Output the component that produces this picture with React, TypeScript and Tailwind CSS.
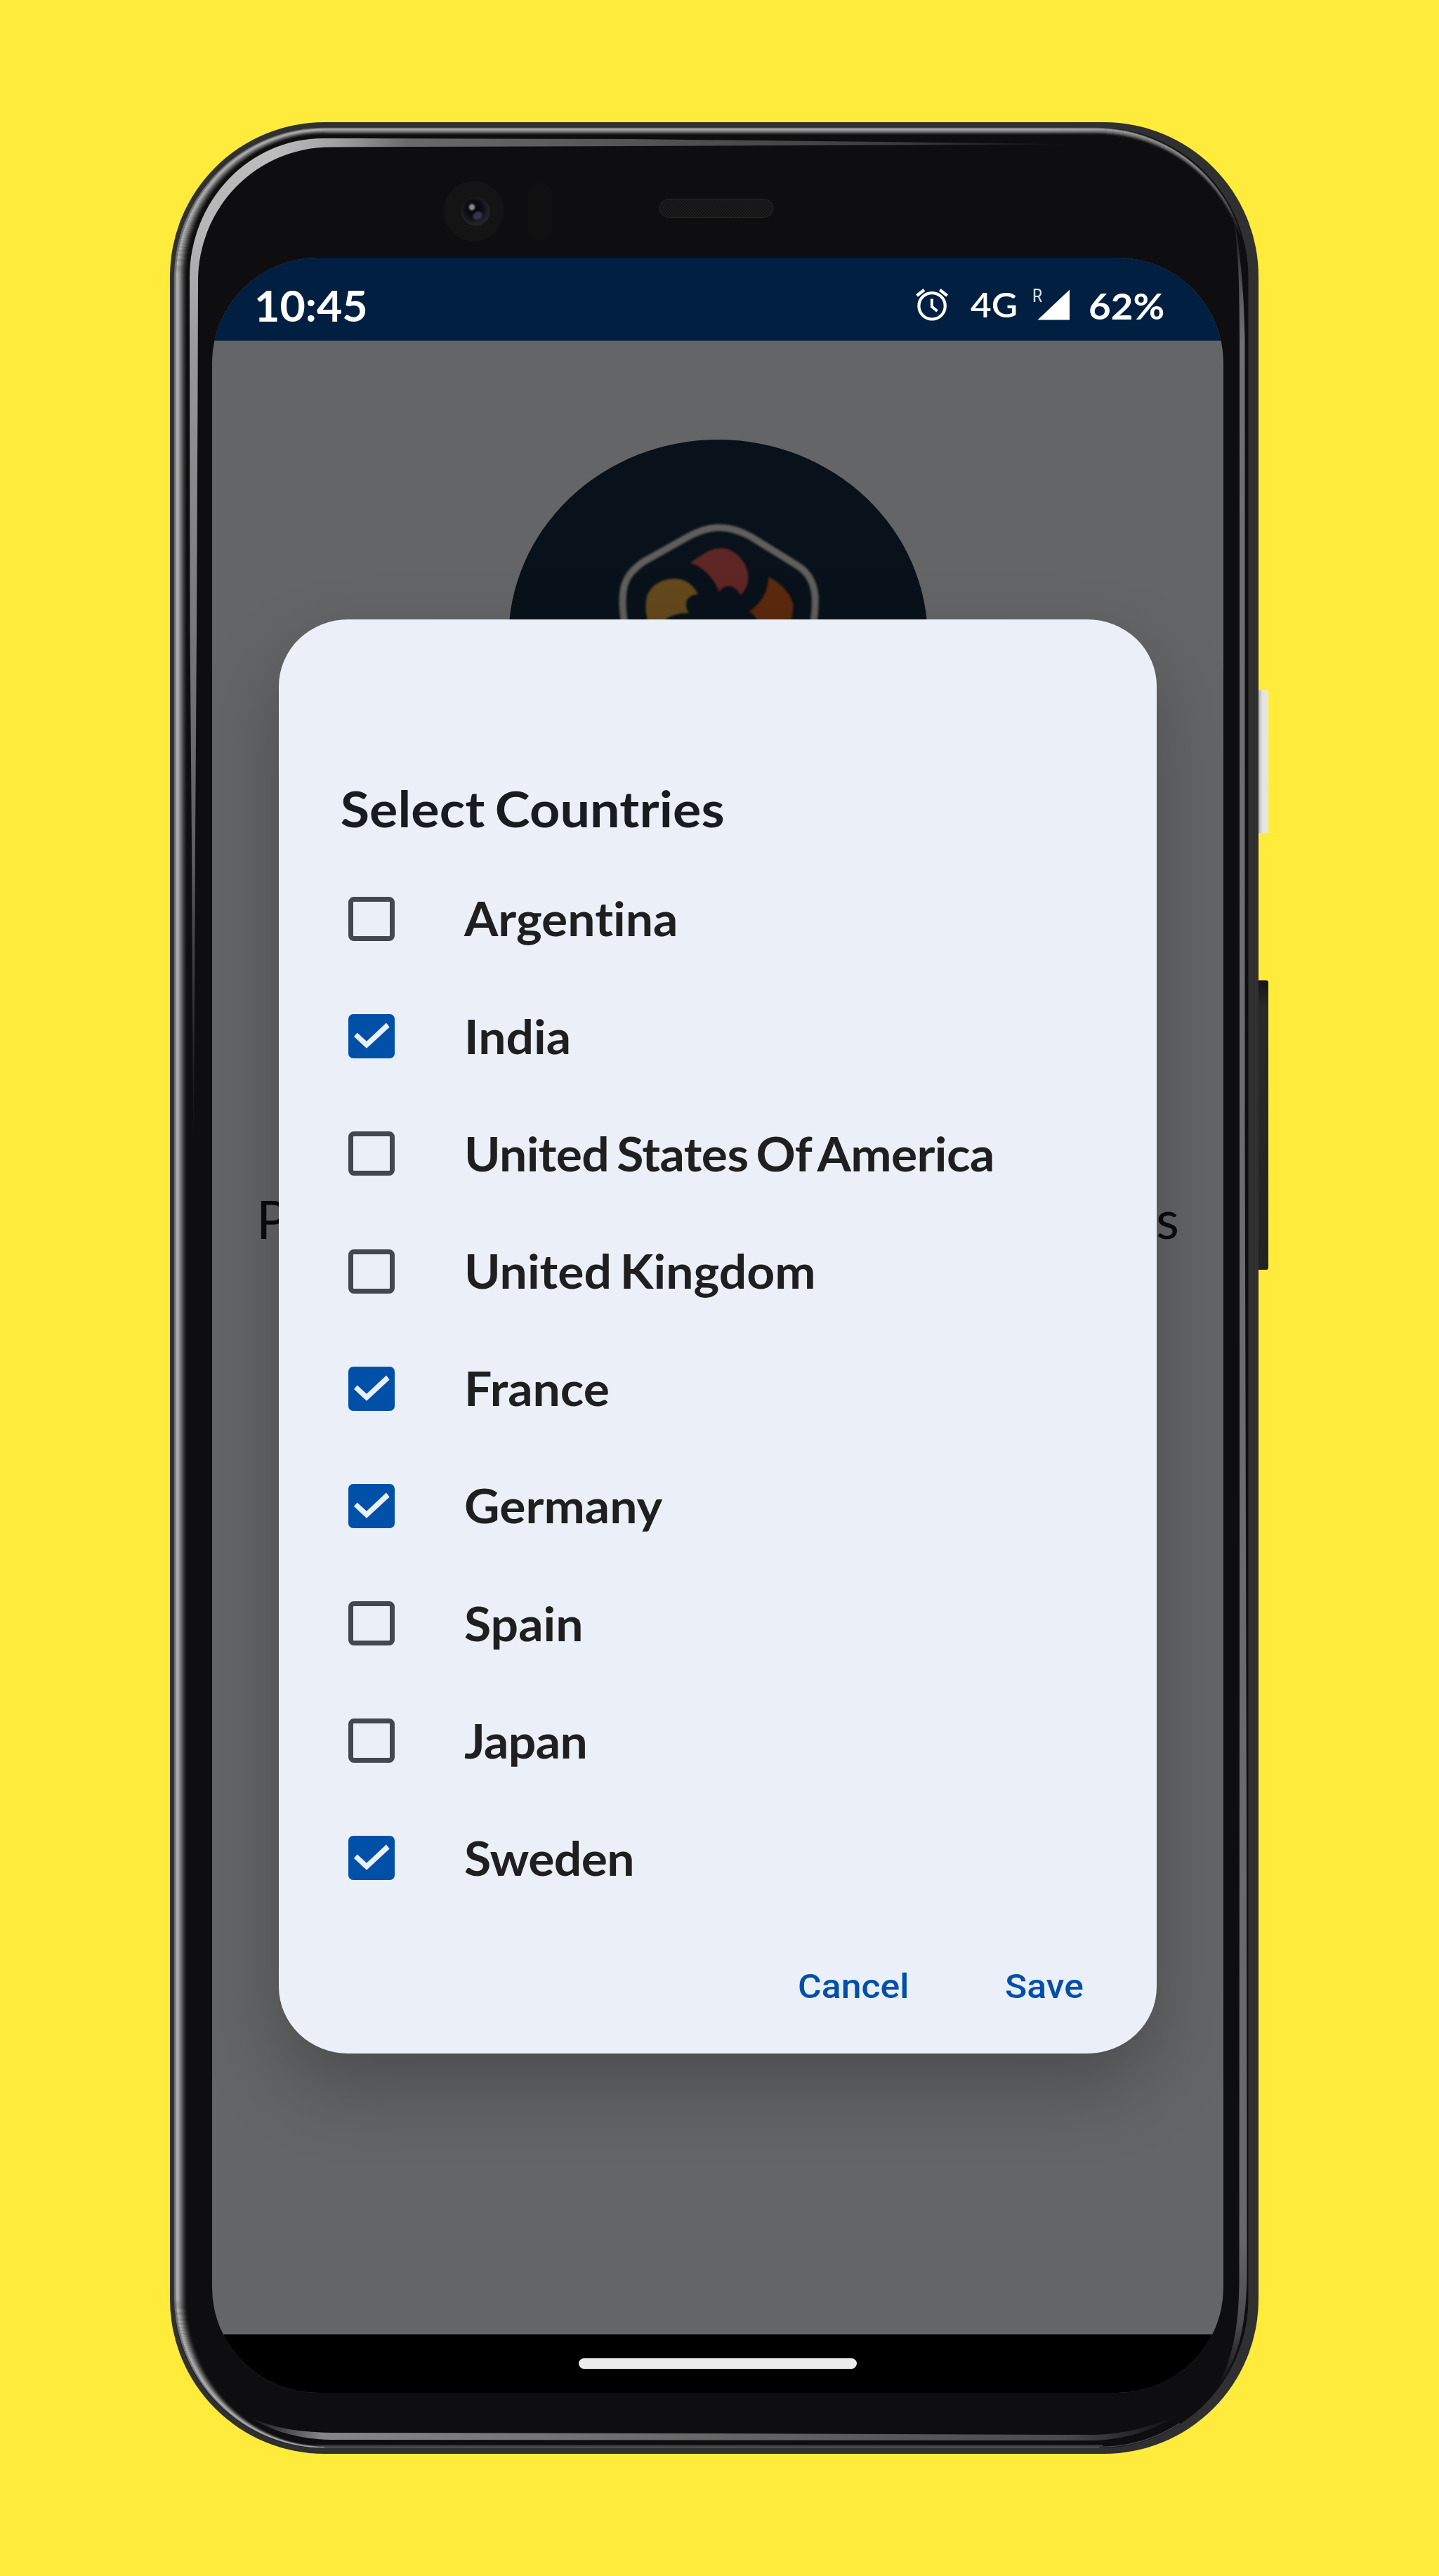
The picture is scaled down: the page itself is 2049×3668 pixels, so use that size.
import React from "react";

const COUNTRIES: { name: string; checked: boolean; tight?: boolean }[] = [
  { name: "Argentina", checked: false },
  { name: "India", checked: true },
  { name: "United States Of America", checked: false, tight: true },
  { name: "United Kingdom", checked: false },
  { name: "France", checked: true },
  { name: "Germany", checked: true },
  { name: "Spain", checked: false },
  { name: "Japan", checked: false, tight: true },
  { name: "Sweden", checked: true, tight: true },
];

const mix = (v: number) => {
  const n = Math.round(v);
  return `rgb(${n},${n},${n + 1})`;
};

/* Brightness of the outer metal edge, from the rim inwards, one value per pixel. */
const LEFT_RIM = [112, 122, 128, 172, 176, 172, 160, 148, 134, 120, 104, 90, 74, 62, 50, 38, 28, 20, 16];

function Bezel() {
  return (
    <svg className="absolute inset-0 h-full w-full" viewBox="242 174 1550 3320" fill="none">
      <defs>
        <linearGradient id="topFade" gradientUnits="userSpaceOnUse" x1="260" y1="0" x2="1540" y2="0">
          <stop offset="0" stopColor="#b4b4b4" />
          <stop offset="0.1" stopColor="#bdbdbd" />
          <stop offset="0.17" stopColor="#a2a2a2" />
          <stop offset="0.25" stopColor="#6a6a6a" />
          <stop offset="0.5" stopColor="#545454" />
          <stop offset="0.8" stopColor="#3c3c3c" />
          <stop offset="1" stopColor="#0e0e10" />
        </linearGradient>
        <linearGradient id="leftFade" gradientUnits="userSpaceOnUse" x1="0" y1="330" x2="0" y2="1620">
          <stop offset="0" stopColor="#b6b6b6" />
          <stop offset="0.14" stopColor="#989898" />
          <stop offset="0.45" stopColor="#777777" />
          <stop offset="0.7" stopColor="#5c5c5e" />
          <stop offset="1" stopColor="#0e0e10" />
        </linearGradient>
        <linearGradient id="rightFade" gradientUnits="userSpaceOnUse" x1="0" y1="300" x2="0" y2="3400">
          <stop offset="0" stopColor="#0e0e10" />
          <stop offset="0.04" stopColor="#5e5e60" />
          <stop offset="0.06" stopColor="#707073" />
          <stop offset="0.93" stopColor="#68686b" />
          <stop offset="0.97" stopColor="#4c4c4e" />
          <stop offset="1" stopColor="#0e0e10" />
        </linearGradient>
        <linearGradient id="bottomFade" gradientUnits="userSpaceOnUse" x1="353" y1="0" x2="1680" y2="0">
          <stop offset="0" stopColor="#0e0e10" />
          <stop offset="0.08" stopColor="#868686" />
          <stop offset="0.35" stopColor="#727272" />
          <stop offset="0.7" stopColor="#585858" />
          <stop offset="0.88" stopColor="#4a4a4a" />
          <stop offset="1" stopColor="#0e0e10" />
        </linearGradient>
        <linearGradient id="cornerMask" gradientUnits="userSpaceOnUse" x1="1500" y1="182" x2="1700" y2="400">
          <stop offset="0" stopColor="#fff" />
          <stop offset="0.6" stopColor="#ccc" />
          <stop offset="0.85" stopColor="#777" />
          <stop offset="1" stopColor="#000" />
        </linearGradient>
        <mask id="cornerShade" maskUnits="userSpaceOnUse" x="242" y="174" width="1550" height="3320">
          <rect x="242" y="174" width="1550" height="3320" fill="url(#cornerMask)" />
        </mask>
        <clipPath id="upper">
          <rect x="242" y="174" width="1550" height="156" />
        </clipPath>
        <clipPath id="lower">
          <rect x="242" y="330" width="1550" height="1400" />
        </clipPath>
        <radialGradient id="lens" cx="0.45" cy="0.42" r="0.6">
          <stop offset="0" stopColor="#07070b" />
          <stop offset="0.45" stopColor="#0b0b10" />
          <stop offset="0.8" stopColor="#1f2026" />
          <stop offset="1" stopColor="#26272b" />
        </radialGradient>
        <pattern id="mesh" width="4" height="4" patternUnits="userSpaceOnUse">
          <rect width="4" height="4" fill="#1e1e1e" />
          <rect width="2" height="2" fill="#121212" />
          <rect x="2" y="2" width="2" height="2" fill="#121212" />
        </pattern>
        <filter id="soft">
          <feGaussianBlur stdDeviation="1.2" />
        </filter>
      </defs>

      <rect x="248" y="182" width="1529.5" height="3304" rx="213" fill="#0e0e10" />

      {/* outer metal rim */}
      {LEFT_RIM.map((v, i) => {
        const x = 248.5 + i;
        const y = 182.5 + i * 0.55;
        const b = 3485 - i * 0.2;
        return (
          <path
            key={i}
            d={`M462 ${b} A${462 - x} ${b - 3270} 0 0 1 ${x} 3270 V395 A${462 - x} ${395 - y} 0 0 1 462 ${y}`}
            stroke={mix(v)}
            strokeWidth="1.3"
          />
        );
      })}
      <g mask="url(#cornerShade)">
        {[96, 158, 166, 150, 134, 116, 96, 72, 44, 24].map((v, i) => {
          const y = 182.5 + i;
          const x = 1777 - i * 0.35;
          return (
            <path
              key={i}
              d={`M461 ${y} H1560 A${x - 1560} ${400 - y} 0 0 1 ${x} 400`}
              stroke={mix(v)}
              strokeWidth="1.3"
            />
          );
        })}
      </g>
      <path d="M452 3482.5 H1570" stroke="#3a3a3a" strokeWidth="2.4" />
      <path d="M452 3484.5 H1565" stroke="#737373" strokeWidth="1.6" />
      <path d="M1565 3484.5 A211.5 211.5 0 0 0 1680 3450.5" stroke="#4c4c4c" strokeWidth="1.4" />

      {/* inner bevel reflections */}
      <g clipPath="url(#upper)">
        <path
          d="M270 395 A190 198 0 0 1 460 197 L900 198 L1540 205.5 L900 208 L470 209.5 A188 190 0 0 0 282 400 Z"
          fill="url(#topFade)"
        />
      </g>
      <g clipPath="url(#lower)">
        <path
          d="M275 1620 L273 1200 L270.5 900 L270 395 A190 198 0 0 1 460 197 L470 209 A188 191 0 0 0 282 400 L281.5 560 L280 900 L278 1200 L276 1620 Z"
          fill="url(#leftFade)"
        />
      </g>
      <path
        d="M1755 300 C1763 350 1765 400 1765 480 L1765 2400 L1764.5 3250 C1764 3320 1752 3368 1730 3404 C1760 3368 1774.5 3320 1775.5 3240 L1775 2600 L1772.5 1600 L1772.5 480 C1771 400 1764 345 1755 300 Z"
        fill="url(#rightFade)"
      />
      <path
        d="M353 3441 C390 3458 430 3464 480 3464 L1000 3465 L1560 3467 C1605 3465 1642 3455 1678 3438 C1644 3460 1605 3473 1560 3475 L1000 3474.5 L470 3474 C430 3473 390 3464 353 3441 Z"
        fill="url(#bottomFade)"
      />

      {/* front camera, sensor window and earpiece */}
      <circle cx="674.6" cy="300.5" r="43" fill="#141414" />
      <circle cx="677" cy="301" r="20.5" fill="url(#lens)" />
      <circle cx="672" cy="295" r="4.4" fill="#8c8c8c" filter="url(#soft)" />
      <ellipse cx="680" cy="307" rx="7" ry="5.5" fill="#34364f" filter="url(#soft)" transform="rotate(-30 680 307)" />
      <rect x="751" y="261" width="35" height="80" rx="14" fill="#101010" />
      <rect x="939" y="283.5" width="162" height="26" rx="13" fill="url(#mesh)" stroke="#262626" />
    </svg>
  );
}

function AlarmIcon() {
  return (
    <svg className="h-[46px] w-[46px]" viewBox="1303.5 412 46 46" fill="none" stroke="#fff">
      <circle cx="1326.6" cy="436.8" r="18.7" strokeWidth="4.2" />
      <path d="M1326.4 426.5 V437.5 L1334 444" strokeWidth="4" />
      <path d="M1305 422 L1315.5 413.8 M1348.2 422 L1337.7 413.8" strokeWidth="4.4" />
    </svg>
  );
}

function SignalIcon() {
  return (
    <svg className="h-[46px] w-[54px] overflow-visible" viewBox="1470 411 54 46">
      <text x="1470" y="430" className="font-['Roboto',sans-serif] text-[25px] font-normal" textLength="14" lengthAdjust="spacingAndGlyphs" fill="#dfe4ea">
        R
      </text>
      <path d="M1523 412.5 V455.5 H1477.5 Z" fill="#fff" />
    </svg>
  );
}

function StatusBar() {
  return (
    <div className="flex h-[117.5px] shrink-0 items-center justify-between bg-[#001f41] pt-[17px] pr-[85px] pl-[60px] font-['Lato',sans-serif] font-bold text-white">
      <span className="origin-left scale-x-[1.02] text-[61.5px]/[70px]">10:45</span>
      <div className="flex w-[353.5px] items-center">
        <div className="w-[78px]">
          <AlarmIcon />
        </div>
        <span className="w-[88px] origin-left scale-x-[1.056] pb-[3px] text-[48.6px]/[60px] font-semibold">4G</span>
        <div className="w-[80px] shrink-0">
          <SignalIcon />
        </div>
        <span className="origin-left scale-x-[1.06] pt-px text-[51.6px]/[60px]">62%</span>
      </div>
    </div>
  );
}

function AppLogo() {
  return (
    <svg className="h-[567px] w-[597px]" viewBox="723.5 626 597 567" fill="none">
      <defs>
        <filter id="logoSoft" x="-10%" y="-10%" width="120%" height="120%">
          <feGaussianBlur stdDeviation="1.5" />
        </filter>
      </defs>
      <ellipse cx="1022" cy="909.5" rx="298.5" ry="283.5" fill="#09111a" />
      <g filter="url(#logoSoft)">
        <path
          d="M890 892 C886 875 884.5 852 888 836 C892 820 901 811 914 801 L978 765 C1010 746.5 1038 746.5 1070 765 L1136 806 C1150 815 1158 828 1160 848 C1161 862 1160 874 1157 892"
          stroke="#5e5e5c"
          strokeWidth="10"
        />
        <path
          d="M982 801.7 C1000 789 1012 780.5 1027 780.5 C1046 781 1065 801 1065 822 C1065 832 1060 842 1053.5 847 C1049 838 1043 834.5 1037 834.5 C1031 834.5 1027 838 1023.5 843 C1017 824 1000 806 982 801.7 Z"
          fill="#5f2525"
        />
        <path
          d="M925 892 C919 878 917 862 921 848 C927 833 942 824 960 824 C976 824 988 834 993.5 846.5 C983 846 976 853 976.5 861 C976.5 866 978 870 980.5 873 C962 873 947 878 938 892 Z"
          fill="#634a1a"
        />
        <path
          d="M1094 821.5 C1112 831 1127 846 1129 863 C1129 873 1126 883 1122 894 H1078 C1079 884 1076 875 1066 871 C1083 860 1093 843 1094 821.5 Z"
          fill="#5c2a11"
        />
      </g>
    </svg>
  );
}

function Checkbox({ checked }: { checked: boolean }) {
  if (!checked) {
    return <span className="h-[63px] w-[66px] shrink-0 rounded-[8px] border-[7.5px] border-[#434850]" />;
  }
  return (
    <span className="h-[63px] w-[66px] shrink-0 rounded-[7px] bg-[#0050a8]">
      <svg className="h-full w-full" viewBox="0 0 66 63">
        <path d="M8 32 L12.7 26.4 L26 38.8 L54 12.6 L58.7 18.4 L26 48.8 Z" fill="#ebf0f8" />
      </svg>
    </span>
  );
}

function CountriesDialog() {
  return (
    <section className="absolute top-[515.3px] left-[94.6px] flex h-[2042px] w-[1250.8px] flex-col rounded-[99px/95px] bg-[#ebf0f8] pt-[217.8px] font-['Lato',sans-serif] [font-variant-ligatures:none] shadow-[0_48px_110px_-2px_rgba(0,0,0,0.25)]">
      <h1 className="origin-left scale-x-[1.056] pl-[83px] text-[71.5px]/[100px] font-bold tracking-[0.1px] [word-spacing:-4px] text-[#181c21]">
        Select Countries
      </h1>
      <ul className="mt-[24.8px]">
        {COUNTRIES.map(({ name, checked, tight }) => (
          <li key={name} className="flex h-[167.2px] items-center gap-[99.5px] pl-[99.2px]">
            <Checkbox checked={checked} />
            <span
              className={`origin-left scale-x-[1.056] text-[66px]/[90px] font-bold whitespace-nowrap [word-spacing:-5px] text-[#1f1f1f] ${tight ? "tracking-[-0.6px]" : "tracking-normal"}`}
            >
              {name}
            </span>
          </li>
        ))}
      </ul>
      <div className="mt-[69.6px] flex pl-[739.5px] font-['Roboto',sans-serif] text-[49px]/[60px] font-medium text-[#0050a8]">
        <button className="w-[294.8px] origin-left scale-x-[1.056] text-left">Cancel</button>
        <button className="origin-left scale-x-[1.056] text-left">Save</button>
      </div>
    </section>
  );
}

export default function App() {
  return (
    <main className="h-[3668px] w-[2049px] overflow-hidden bg-[#ffeb3b] pt-[174px] pl-[242px]">
      <div className="relative h-[3320px] w-[1550px] rounded-[220px] bg-[#303030] pt-[193px] pl-[60px]">
        <span className="absolute top-[809px] left-[1550px] h-[203px] w-[14px] rounded-r-[3px] bg-linear-to-r from-[#b4b4b4] via-[#e3e3e3] via-40% to-[#e6e6e6]" />
        <span className="absolute top-[1222px] left-[1550px] h-[412px] w-[14px] rounded-r-[3px] bg-linear-to-b from-[#161616] via-[#2a2a2a] via-10% to-[#222222]" />
        <Bezel />
        <div className="relative flex h-[3040px] w-[1440px] flex-col overflow-hidden rounded-[150px] bg-[#646567]">
          <StatusBar />
          <div className="flex flex-1 flex-col items-center pt-[141px]">
            <AppLogo />
            <p className="mt-[492px] flex w-full justify-between px-[63px] font-['Lato',sans-serif] text-[76px]/[100px] text-[#0a0b0d]">
              <span>P</span>
              <span>s</span>
            </p>
          </div>
          <div className="flex h-[83.5px] shrink-0 items-center justify-center bg-black">
            <span className="h-[15px] w-[396px] rounded-full bg-[#ebebeb]" />
          </div>
          <CountriesDialog />
        </div>
      </div>
    </main>
  );
}
